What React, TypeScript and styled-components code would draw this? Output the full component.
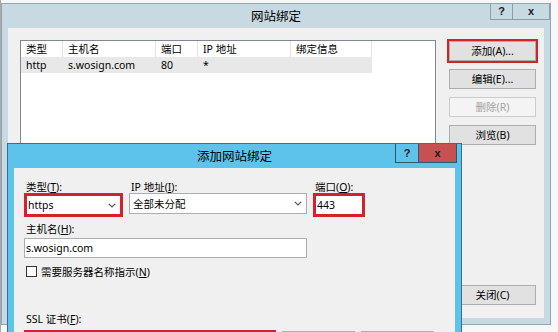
import React from "react";
import styled, { createGlobalStyle } from "styled-components";

const GlobalStyle = createGlobalStyle`
    html, body {
        margin: 0;
        padding: 0;
    }
    body {
        width: 558px;
        height: 332px;
        overflow: hidden;
        background: #f8f8f8;
        font-family: "Noto Sans", "Noto Sans CJK SC", sans-serif;
        font-size: 10.5px;
        color: #000;
    }
    * {
        box-sizing: border-box;
    }
`;

const columns = ["类型", "主机名", "端口", "IP 地址", "绑定信息"];
const bindings = [{ type: "http", host: "s.wosign.com", port: "80", ip: "*", info: "" }];

const Chevron = () => (
    <svg width="8" height="5" viewBox="0 0 8 5">
        <polyline points="0.8,0.8 4,4 7.2,0.8" fill="none" stroke="#555" strokeWidth="1.2" />
    </svg>
);

const App = () => {
    return (
        <Desktop>
            <GlobalStyle />
            <OuterWindow>
                <TitleBar>
                    <span />
                    <Title>网站绑定</Title>
                    <Controls $right={0}>
                        <CtrlButton $w={23} $h={16}>?</CtrlButton>
                        <CtrlButton $w={38} $h={16}>x</CtrlButton>
                    </Controls>
                </TitleBar>
                <OuterBody>
                    <BindingList>
                        <ListHeader>
                            {columns.map((c) => (
                                <HeaderCell key={c}>{c}</HeaderCell>
                            ))}
                        </ListHeader>
                        {bindings.map((b) => (
                            <ListRow key={b.host}>
                                <Cell>{b.type}</Cell>
                                <Cell>{b.host}</Cell>
                                <Cell>{b.port}</Cell>
                                <Cell>{b.ip}</Cell>
                                <Cell>{b.info}</Cell>
                            </ListRow>
                        ))}
                    </BindingList>
                    <ButtonColumn>
                        <WinButton $highlight>添加(A)...</WinButton>
                        <WinButton>编辑(E)...</WinButton>
                        <WinButton $disabled>删除(R)</WinButton>
                        <WinButton>浏览(B)</WinButton>
                        <CloseButton>关闭(C)</CloseButton>
                    </ButtonColumn>
                </OuterBody>
            </OuterWindow>

            <DialogWindow>
                <TitleBar>
                    <span />
                    <Title>添加网站绑定</Title>
                    <Controls $right={4}>
                        <CtrlButton $w={24} $h={19} $active>?</CtrlButton>
                        <CtrlButton $w={39} $h={19} $active $close>x</CtrlButton>
                    </Controls>
                </TitleBar>
                <DialogBody>
                    <FieldsRow>
                        <FieldGroup>
                            <Label>
                                类型(<u>T</u>):
                            </Label>
                            <Field $highlight>
                                https
                                <Chevron />
                            </Field>
                        </FieldGroup>
                        <FieldGroup>
                            <Label>
                                IP 地址(<u>I</u>):
                            </Label>
                            <Field>
                                全部未分配
                                <Chevron />
                            </Field>
                        </FieldGroup>
                        <FieldGroup>
                            <Label>
                                端口(<u>O</u>):
                            </Label>
                            <Field $highlight>443</Field>
                        </FieldGroup>
                    </FieldsRow>

                    <Label $top={6}>
                        主机名(<u>H</u>):
                    </Label>
                    <HostField>s.wosign.com</HostField>

                    <CheckRow>
                        <CheckBox />
                        <span>
                            需要服务器名称指示(<u>N</u>)
                        </span>
                    </CheckRow>

                    <Label $top={36}>
                        SSL 证书(<u>F</u>):
                    </Label>
                    {/* the rest of this row runs past the bottom of the shot */}
                    <SslRow>
                        <SslField $highlight />
                        <SslButton />
                        <SslButton />
                    </SslRow>
                </DialogBody>
            </DialogWindow>
        </Desktop>
    );
};

const Desktop = styled.div`
    position: relative;
    width: 558px;
    height: 332px;
    overflow: hidden;
    border-left: 1px solid #a9a9a9;
`;

const WindowFrame = styled.div`
    position: absolute;
    display: flex;
    flex-direction: column;
    padding: 0 6px 6px;
`;

const OuterWindow = styled(WindowFrame)`
    left: 0px;
    top: 3px;
    width: 550px;
    height: 322px;
    border: 1px solid #93a5af;
    background: #c7d9e2;
`;

const DialogWindow = styled(WindowFrame)`
    left: 6px;
    top: 143px;
    width: 455px;
    height: 220px;
    border: 1px solid #2e7396;
    background: #5ec3ea;
`;

const TitleBar = styled.div`
    display: grid;
    grid-template-columns: 1fr auto 1fr;
    height: 24px;
    margin: 0 -6px;
`;

const Title = styled.span`
    font-family: "Noto Sans CJK SC", sans-serif;
    font-size: 12.5px;
    line-height: 24px;
    color: #000;
`;

const Controls = styled.div<{ $right: number }>`
    display: flex;
    justify-self: end;
    align-self: start;
    padding-right: ${({ $right }) => $right}px;
`;

const CtrlButton = styled.div<{ $w: number; $h: number; $active?: boolean; $close?: boolean }>`
    display: flex;
    align-items: center;
    justify-content: center;
    width: ${({ $w }) => $w}px;
    height: ${({ $h }) => $h}px;
    margin-left: -1px;
    border: 1px solid ${({ $active }) => ($active ? "#2a5870" : "#8e9ea8")};
    border-top: none;
    background: ${({ $close, $active }) => ($close ? "#c75050" : $active ? "#5ec3ea" : "#c7d9e2")};
    font-family: "Liberation Sans", sans-serif;
    font-size: 11px;
    font-weight: 700;
    color: #1a1a1a;
    line-height: 1;
`;

const OuterBody = styled.div`
    display: flex;
    flex: 1;
    gap: 13px;
    padding: 12px 7px 13px 12px;
    background: #f0f0f0;
`;

const BindingList = styled.div`
    width: 416px;
    border: 1px solid #828790;
    background: #fff;
`;

const ListHeader = styled.div`
    display: grid;
    grid-template-columns: 42px 93px 42px 93px 81px;
    height: 16px;
`;

const HeaderCell = styled.div`
    padding-left: 5px;
    line-height: 16px;
    border-right: 1px solid #e3e3e3;
    white-space: nowrap;
`;

const ListRow = styled(ListHeader)`
    width: 351px;
    background: #e8e8e8;
`;

const Cell = styled.div`
    padding-left: 5px;
    line-height: 16px;
    white-space: nowrap;
`;

const ButtonColumn = styled.div`
    display: flex;
    flex-direction: column;
    gap: 8px;
    width: 87px;
    padding-top: 1px;
`;

const WinButton = styled.button<{ $disabled?: boolean; $highlight?: boolean }>`
    height: 20px;
    padding: 0;
    border: 1px solid ${({ $disabled }) => ($disabled ? "#cccccc" : "#adadad")};
    background: ${({ $disabled }) => ($disabled ? "#f4f4f4" : "#e1e1e1")};
    color: ${({ $disabled }) => ($disabled ? "#a3a3a3" : "#000")};
    font-family: inherit;
    font-size: inherit;
    line-height: 18px;
    text-align: center;
    outline: ${({ $highlight }) => ($highlight ? "2px solid #d3222a" : "none")};
`;

const CloseButton = styled(WinButton)`
    margin-top: auto;
`;

const DialogBody = styled.div`
    display: flex;
    flex-direction: column;
    align-items: flex-start;
    flex: 1;
    padding: 13px 10px 0;
    background: #f0f0f0;
`;

const FieldsRow = styled.div`
    display: grid;
    grid-template-columns: 99px 178px 52px;
    column-gap: 6px;
    align-items: start;
`;

const FieldGroup = styled.div`
    display: flex;
    flex-direction: column;
`;

const Label = styled.div<{ $top?: number }>`
    height: 12px;
    margin-top: ${({ $top }) => $top ?? 0}px;
    padding-left: 2px;
    line-height: 12px;
    white-space: nowrap;
`;

const Field = styled.div<{ $highlight?: boolean }>`
    display: flex;
    align-items: center;
    justify-content: space-between;
    height: ${({ $highlight }) => ($highlight ? 24 : 21)}px;
    padding: 0 4px 0 ${({ $highlight }) => ($highlight ? 1 : 3)}px;
    border: ${({ $highlight }) => ($highlight ? "3px solid #d3222a" : "1px solid #abadb3")};
    background: #fff;
    white-space: nowrap;
`;

const HostField = styled(Field)`
    width: 283px;
    height: 20px;
    margin-top: 3px;
    padding-left: 1px;
`;

const CheckRow = styled.div`
    display: flex;
    align-items: center;
    gap: 4px;
    height: 11px;
    margin-top: 8px;
    padding-left: 2px;
`;

const CheckBox = styled.span`
    width: 11px;
    height: 11px;
    border: 1px solid #333;
    background: #fff;
`;

const SslRow = styled.div`
    display: flex;
    align-items: flex-start;
    gap: 6px;
    margin-top: 5px;
`;

const SslField = styled(Field)`
    width: 252px;
`;

const SslButton = styled(WinButton)`
    width: 73px;
    height: 22px;
    margin-top: 1px;
`;

export default App;
